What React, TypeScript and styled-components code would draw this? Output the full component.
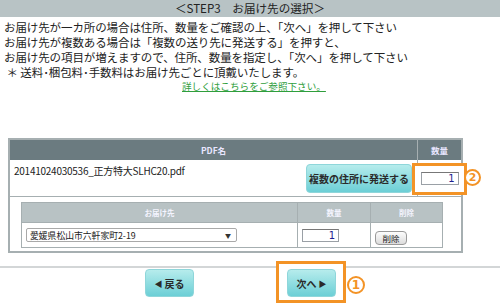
import styled, { createGlobalStyle } from "styled-components";

const Global = createGlobalStyle`
    body {
        margin: 0;
        background: #fff;
        font-family: "Noto Sans CJK JP", "Noto Sans", sans-serif;
        color: #222;
    }
`;

const Page = styled.div`
    width: 500px;
    height: 308px;
    overflow: hidden;
    position: relative;
`;

const TitleBar = styled.div`
    height: 17px;
    background: #b8c3c5;
    text-align: center;
    font-size: 11.6px;
    line-height: 17px;
    color: #222;
`;

const Guide = styled.div`
    padding: 3px 0 0 4px;
    font-size: 11.5px;
    line-height: 15px;
    letter-spacing: -0.1px;
    white-space: nowrap;
`;

const LinkLine = styled.div`
    padding-left: 182px;
    line-height: 12px;
    font-size: 9.6px;
`;

const HelpLink = styled.a`
    color: #2f9e3c;
    text-decoration: underline;
`;

const Outer = styled.table`
    margin: 46px 0 0 8px;
    width: 455px;
    border-collapse: collapse;
    border: 2px solid #a6afb1;
`;

const HeadCell = styled.th<{ $w?: number }>`
    background: #6b7b80;
    height: 20px;
    padding: 0;
    font-size: 8.5px;
    font-weight: bold;
    color: #e9e6ff;
    border-left: 1px solid #a6afb1;
    width: ${(p) => (p.$w ? `${p.$w}px` : "auto")};
`;

const Cell = styled.td`
    padding: 0;
    border-bottom: 1px solid #a6afb1;
    border-left: 1px solid #a6afb1;
    vertical-align: middle;
`;

const FileCell = styled.div`
    display: flex;
    justify-content: space-between;
    align-items: flex-start;
    height: 36px;
    padding: 4px 5px 0 4px;
    box-sizing: border-box;
`;

const FileName = styled.span`
    font-size: 10px;
    line-height: 13px;
    letter-spacing: -0.25px;
    color: #222;
`;

const TealButton = styled.button<{ $w: number; $h: number }>`
    position: relative;
    z-index: 1;
    width: ${(p) => p.$w}px;
    height: ${(p) => p.$h}px;
    padding: 0;
    border: 1px solid #8fd6da;
    border-radius: 4px;
    background: linear-gradient(#b6ecec, #6ccfd6);
    font-family: "Noto Sans CJK JP", sans-serif;
    font-weight: bold;
    font-size: 10px;
    color: #2a2a2a;
    display: flex;
    align-items: center;
    justify-content: center;
    gap: 2px;
`;

const Spot = styled.div`
    position: relative;
    display: flex;
    justify-content: center;
`;

const QtyInput = styled.div<{ $w: number }>`
    position: relative;
    z-index: 1;
    width: ${(p) => p.$w}px;
    height: 13px;
    box-sizing: border-box;
    border: 1px solid #9aa0a6;
    border-top-color: #777;
    background: #fff;
    font-size: 10px;
    line-height: 11px;
    text-align: right;
    padding-right: 3px;
    color: #1d1d8f;
    font-family: "DejaVu Sans", sans-serif;
`;

const Marker = styled.div<{ $t: number; $l: number; $r: number; $b: number }>`
    position: absolute;
    top: ${(p) => -p.$t}px;
    left: ${(p) => -p.$l}px;
    right: ${(p) => -p.$r}px;
    bottom: ${(p) => -p.$b}px;
    border: 3px solid #f39326;
    background: #fff;
    pointer-events: none;
`;

const Number = styled.div<{ $x: number; $y: number; $d: number }>`
    position: absolute;
    left: ${(p) => p.$x}px;
    top: ${(p) => p.$y}px;
    width: ${(p) => p.$d}px;
    height: ${(p) => p.$d}px;
    box-sizing: border-box;
    border: 2px solid #f39326;
    border-radius: 50%;
    background: #fff;
    color: #f39326;
    font-family: "DejaVu Sans", sans-serif;
    font-weight: bold;
    font-size: ${(p) => p.$d - 6}px;
    line-height: ${(p) => p.$d - 4}px;
    text-align: center;
`;

const Inner = styled.table`
    margin: 5px 0 3px 11px;
    width: 422px;
    border-collapse: collapse;
    border: 1px solid #a6afb1;
`;

const SubHead = styled.th<{ $w: number }>`
    width: ${(p) => p.$w}px;
    height: 19px;
    padding: 0;
    background: #b8c2c4;
    border-left: 1px solid #a6afb1;
    font-size: 7.5px;
    font-weight: bold;
    color: #f4f4ff;
`;

const SubCell = styled.td`
    height: 22px;
    padding: 0 4px;
    border-left: 1px solid #a6afb1;
    border-top: 1px solid #a6afb1;
    vertical-align: middle;
`;

const Select = styled.div`
    width: 211px;
    height: 14px;
    box-sizing: border-box;
    border: 1px solid #a9a9a9;
    border-radius: 2px;
    display: flex;
    align-items: center;
    justify-content: space-between;
    padding: 0 5px 0 3px;
    font-size: 8.8px;
    color: #222;
`;

const Caret = styled.span`
    font-size: 6px;
    color: #333;
`;

const DeleteButton = styled.button`
    width: 32px;
    height: 14px;
    padding: 0;
    border: 1px solid #999;
    border-radius: 4px;
    background: linear-gradient(#fdfdfd, #dcdcdc);
    font-family: "Noto Sans CJK JP", sans-serif;
    font-size: 8.5px;
    line-height: 12px;
    color: #222;
`;

const Divider = styled.div`
    margin-top: 13px;
    border-top: 2px solid #d3d6d7;
`;

const Footer = styled.div`
    display: flex;
    gap: 93px;
    padding: 1px 0 0 145px;
`;

const Arrow = styled.span`
    font-size: 8px;
`;

export default function App() {
    return (
        <Page>
            <Global />
            <TitleBar>＜STEP3　お届け先の選択＞</TitleBar>
            <Guide>
                <div>お届け先が一カ所の場合は住所、数量をご確認の上、「次へ」を押して下さい</div>
                <div>お届け先が複数ある場合は「複数の送り先に発送する」を押すと、</div>
                <div>お届け先の項目が増えますので、住所、数量を指定し、「次へ」を押して下さい</div>
                <div>&nbsp;＊ 送料･梱包料･手数料はお届け先ごとに頂戴いたします。</div>
            </Guide>
            <LinkLine>
                <HelpLink>詳しくはこちらをご参照下さい。</HelpLink>
            </LinkLine>
            <Outer>
                <thead>
                    <tr>
                        <HeadCell>PDF名</HeadCell>
                        <HeadCell $w={43}>数量</HeadCell>
                    </tr>
                </thead>
                <tbody>
                    <tr>
                        <Cell>
                            <FileCell>
                                <FileName>20141024030536_正方特大SLHC20.pdf</FileName>
                                <TealButton $w={106} $h={29}>複数の住所に発送する</TealButton>
                            </FileCell>
                        </Cell>
                        <Cell>
                            <Spot>
                                <Marker $t={9} $l={6} $r={6} $b={10} />
                                <QtyInput $w={38}>1</QtyInput>
                                <Number $x={46} $y={-3} $d={17}>2</Number>
                            </Spot>
                        </Cell>
                    </tr>
                    <tr>
                        <Cell colSpan={2}>
                            <Inner>
                                <thead>
                                    <tr>
                                        <SubHead $w={277}>お届け先</SubHead>
                                        <SubHead $w={73}>数量</SubHead>
                                        <SubHead $w={72}>削除</SubHead>
                                    </tr>
                                </thead>
                                <tbody>
                                    <tr>
                                        <SubCell>
                                            <Select>
                                                <span>愛媛県松山市六軒家町2-19</span>
                                                <Caret>▼</Caret>
                                            </Select>
                                        </SubCell>
                                        <SubCell>
                                            <QtyInput $w={37}>1</QtyInput>
                                        </SubCell>
                                        <SubCell>
                                            <DeleteButton>削除</DeleteButton>
                                        </SubCell>
                                    </tr>
                                </tbody>
                            </Inner>
                        </Cell>
                    </tr>
                </tbody>
            </Outer>
            <Divider />
            <Footer>
                <TealButton $w={49} $h={28}>
                    <Arrow>◀</Arrow>戻る
                </TealButton>
                <Spot>
                    <Marker $t={8} $l={11} $r={10} $b={6} />
                    <TealButton $w={49} $h={28}>
                        次へ<Arrow>▶</Arrow>
                    </TealButton>
                    <Number $x={60} $y={7} $d={18}>1</Number>
                </Spot>
            </Footer>
        </Page>
    );
}
